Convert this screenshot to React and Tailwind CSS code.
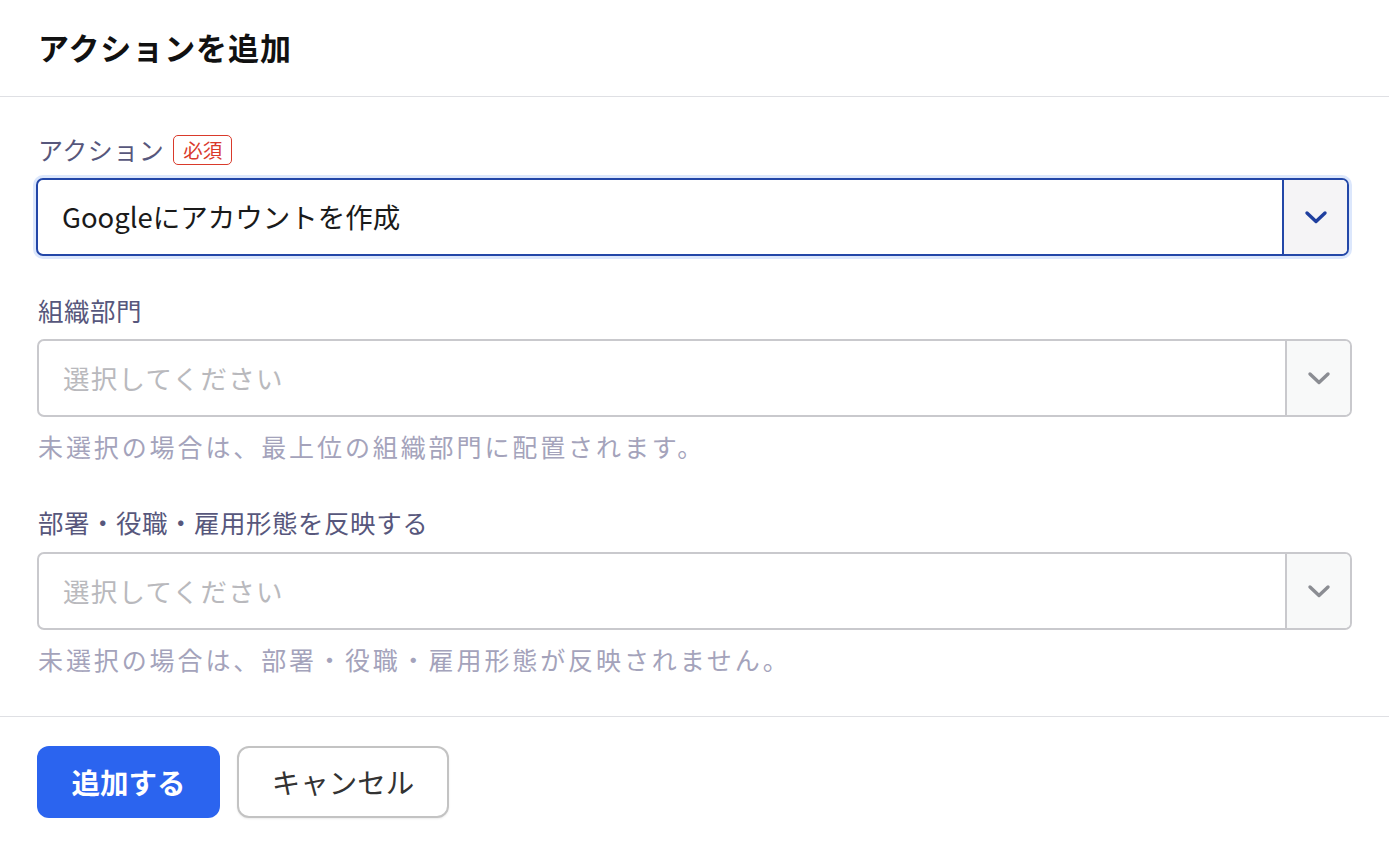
import React from "react";

const Chevron = ({ active }) => (
  <svg width="24" height="16" viewBox="0 0 24 16" fill="none">
    <path
      d="M3 4l9 8.5L21 4"
      stroke={active ? "#1f3f9f" : "#8b8d93"}
      strokeWidth="3.4"
      strokeLinecap="round"
      strokeLinejoin="round"
    />
  </svg>
);

const Select = ({ value, placeholder, active }) => (
  <div
    className={
      active
        ? "flex h-[78px] w-full rounded-[7px] border-2 border-[#2347a8] bg-white ring-[3px] ring-[#dce7fc]"
        : "flex h-[78px] w-full rounded-[7px] border-2 border-[#c9c9cd] bg-white"
    }
  >
    <div
      className={
        value
          ? "flex flex-1 items-center pl-[24px] text-[27.5px] text-[#1a1a1a]"
          : "flex flex-1 items-center pl-[24px] text-[26.5px] tracking-[1.3px] text-[#b9b9bd]"
      }
    >
      {value || placeholder}
    </div>
    <div
      className={
        active
          ? "flex w-[65px] items-center justify-center rounded-r-[5px] border-l-2 border-[#2347a8] bg-[#f5f4f6]"
          : "flex w-[65px] items-center justify-center rounded-r-[5px] border-l-2 border-[#c9c9cd] bg-[#f8f9f9]"
      }
    >
      <Chevron active={active} />
    </div>
  </div>
);

export default function App() {
  return (
    <div
      className="min-h-[843px] w-full bg-white"
      style={{ fontFamily: '"Noto Sans CJK JP", "Noto Sans", sans-serif' }}
    >
      <div className="flex h-[97px] items-center border-b border-[#dfe0e4] px-[38px] pb-[2px]">
        <h1 className="text-[31px] font-bold tracking-[0.03em] text-[#111]">
          アクションを追加
        </h1>
      </div>

      <div className="px-[37px] pt-[35px] pb-[38px]">
        <div>
          <div className="flex h-[36px] items-center gap-[9px] pl-[1px]">
            <span className="text-[25px] tracking-[0.02em] text-[#57577c]">アクション</span>
            <span className="flex h-[30px] items-center rounded-[5px] border-[1.5px] border-[#d93a2b] px-[9px] text-[19.5px] text-[#d93a2b]">
              必須
            </span>
          </div>
          <div className="ml-[-1px] mr-[3px] mt-[10px]">
            <Select value="Googleにアカウントを作成" active />
          </div>
        </div>

        <div className="mt-[36px]">
          <div className="flex h-[36px] items-center pl-[1px] text-[25.5px] tracking-[0.02em] text-[#57577c]">
            組織部門
          </div>
          <div className="mt-[11px]">
            <Select placeholder="選択してください" />
          </div>
          <div className="mt-[12px] flex h-[36px] items-center pl-[1px] text-[25px] tracking-[2.9px] text-[#a4a3bb]">
            未選択の場合は、最上位の組織部門に配置されます。
          </div>
        </div>

        <div className="mt-[39px]">
          <div className="flex h-[36px] items-center pl-[1px] text-[25.5px] tracking-[0.02em] text-[#57577c]">
            部署・役職・雇用形態を反映する
          </div>
          <div className="mt-[12px]">
            <Select placeholder="選択してください" />
          </div>
          <div className="mt-[12px] flex h-[36px] items-center pl-[1px] text-[25px] tracking-[2.9px] text-[#a4a3bb]">
            未選択の場合は、部署・役職・雇用形態が反映されません。
          </div>
        </div>
      </div>

      <div className="flex gap-[17px] border-t border-[#dfe0e4] px-[37px] pt-[29px]">
        <button className="flex h-[72px] w-[183px] items-center justify-center rounded-[12px] bg-[#2b64ef] text-[28.5px] font-bold text-white">
          追加する
        </button>
        <button className="flex h-[72px] w-[212px] items-center justify-center rounded-[12px] border-2 border-[#c3c3c3] bg-white text-[28.5px] text-[#333] shadow-[0_1px_2px_rgba(0,0,0,0.08)]">
          キャンセル
        </button>
      </div>
    </div>
  );
}
